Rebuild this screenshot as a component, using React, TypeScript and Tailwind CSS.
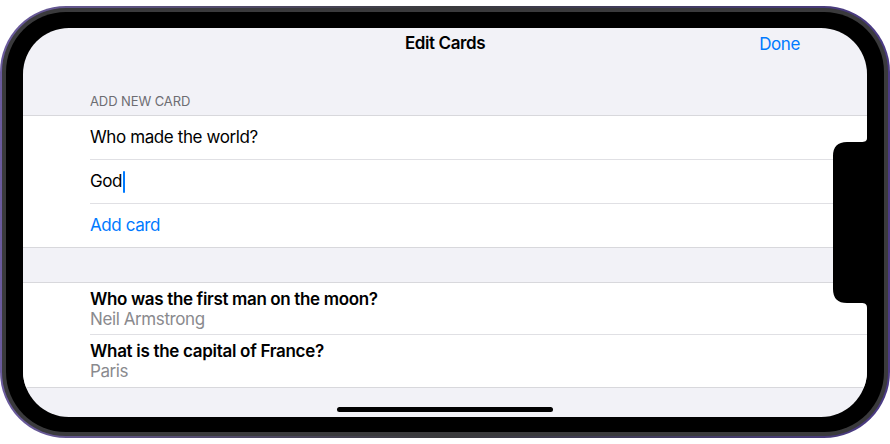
import React from "react";

function Notch() {
  return (
    <svg
      className="absolute left-[806px] top-[110px]"
      width="38"
      height="170"
      viewBox="0 0 38 170"
    >
      <path
        d="M38 0 C38 3 36 4 32 4 L18 4 Q4 4 4 18 L4 151 Q4 165 18 165 L32 165 C36 165 38 166 38 170 Z"
        fill="#000"
      />
    </svg>
  );
}

export default function App() {
  return (
    <div
      className="h-[444px] w-[890px] overflow-hidden bg-white pt-[6px]"
      style={{ fontFamily: "Inter, 'Liberation Sans', sans-serif" }}
    >
      <div className="h-[432px] w-[890px] rounded-[66px] bg-gradient-to-r from-[#6b5b9e] via-[#3a3a3c] to-[#4b3a86] p-[2px]">
        <div className="h-full w-full rounded-[64px] bg-[#3a3a3c] p-[4px]">
          <div className="h-full w-full rounded-[60px] bg-black pb-[15px] pl-[17px] pr-[17px] pt-[16px]">
            <div className="relative flex h-[389px] w-[844px] flex-col overflow-hidden rounded-[46px] bg-[#f2f2f7]">
              {/* Nav bar */}
              <div className="relative flex h-[31px] items-center justify-center">
                <span className="text-[17px] font-semibold tracking-[-0.4px] text-black">
                  Edit Cards
                </span>
                <span className="absolute right-[67px] top-[1px] flex h-[31px] items-center text-[17px] tracking-[-0.4px] text-[#007aff]">
                  Done
                </span>
              </div>

              {/* Section header */}
              <div className="pb-[6px] pl-[67px] pt-[34px] text-[13px] uppercase leading-[16px] tracking-[-0.1px] text-[#6d6d72]">
                Add new card
              </div>

              {/* Add card section */}
              <div className="border-y border-[#d8d8dc] bg-white">
                <div className="pl-[67px]">
                  <div className="flex h-[44px] items-center border-b border-[#e0e0e4] text-[17px] tracking-[-0.4px] text-black">
                    Who made the world?
                  </div>
                  <div className="flex h-[44px] items-center border-b border-[#e0e0e4] text-[17px] tracking-[-0.4px] text-black">
                    God
                    <span className="ml-[1px] inline-block h-[22px] w-[2px] rounded-full bg-[#007aff]" />
                  </div>
                  <div className="flex h-[43px] items-center text-[17px] tracking-[-0.4px] text-[#007aff]">
                    Add card
                  </div>
                </div>
              </div>

              <div className="h-[34px]" />

              {/* Cards list */}
              <div className="border-y border-[#d8d8dc] bg-white">
                <div className="pl-[67px]">
                  <div className="flex h-[52px] flex-col border-b border-[#e0e0e4] pt-[6px]">
                    <span className="text-[17px] font-semibold leading-[20px] tracking-[-0.35px] text-black">
                      Who was the first man on the moon?
                    </span>
                    <span className="text-[17px] leading-[21px] tracking-[-0.4px] text-[#8a8a8e]">
                      Neil Armstrong
                    </span>
                  </div>
                  <div className="flex h-[52px] flex-col pt-[6px]">
                    <span className="text-[17px] font-semibold leading-[20px] tracking-[-0.3px] text-black">
                      What is the capital of France?
                    </span>
                    <span className="text-[17px] leading-[21px] tracking-[-0.4px] text-[#8a8a8e]">
                      Paris
                    </span>
                  </div>
                </div>
              </div>

              {/* Home indicator */}
              <div className="absolute bottom-[5px] left-[314px] h-[5px] w-[216px] rounded-full bg-black" />

              <Notch />
            </div>
          </div>
        </div>
      </div>
    </div>
  );
}
